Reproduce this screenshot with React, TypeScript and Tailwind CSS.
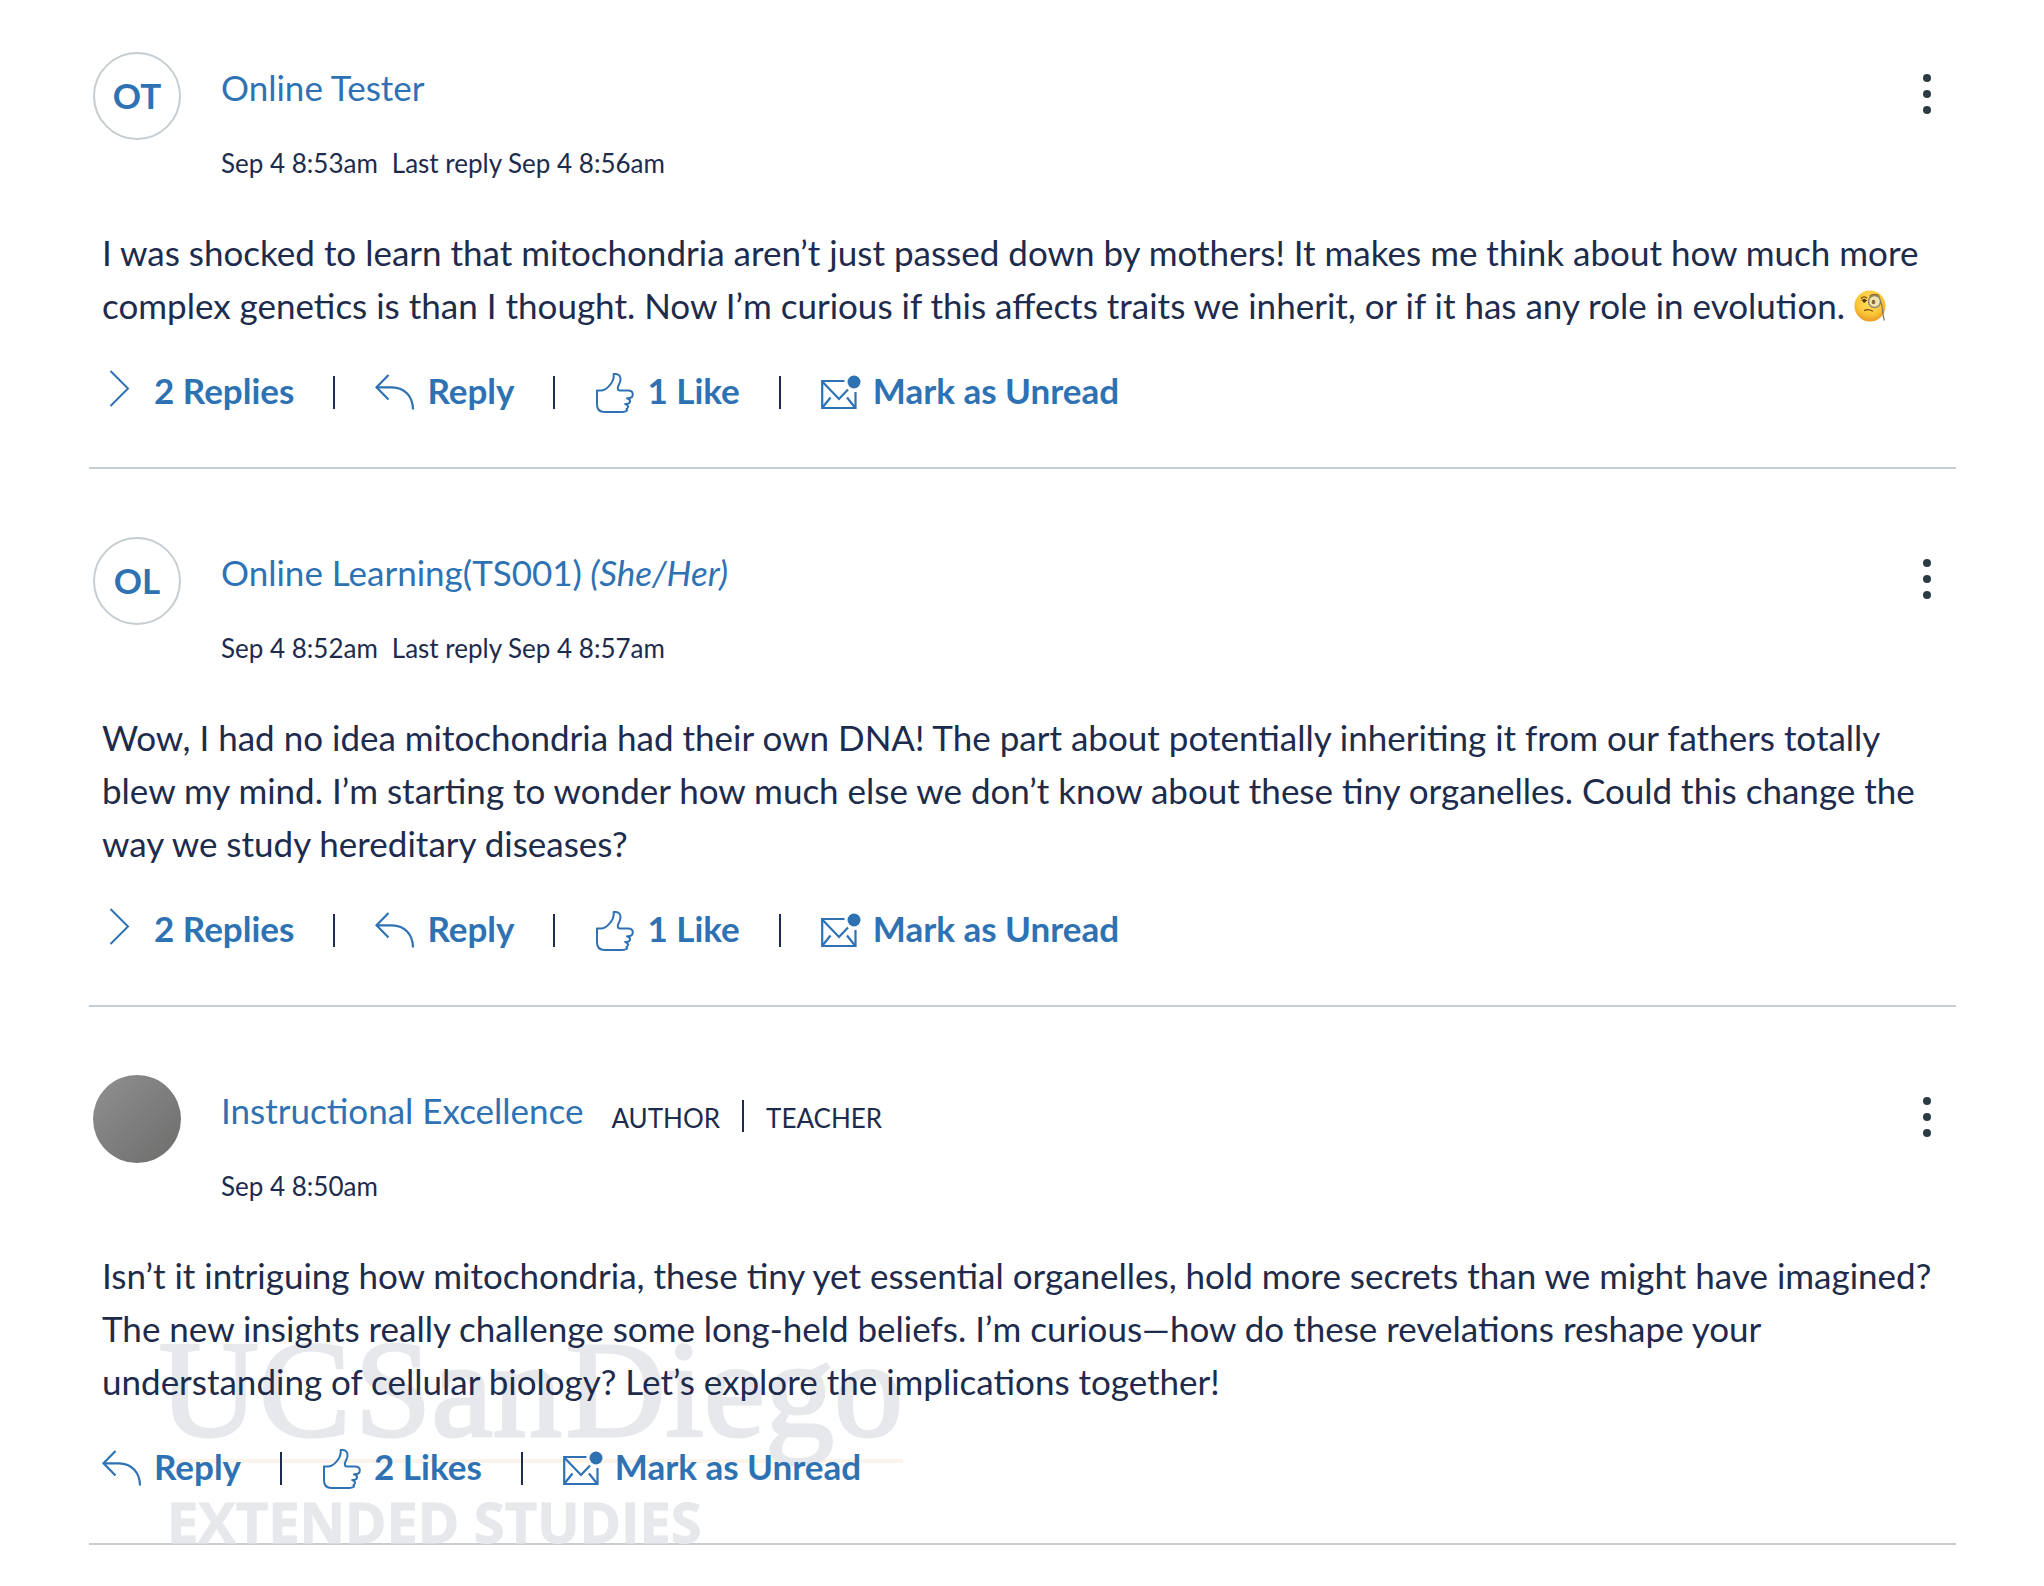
import { Fragment, type ReactNode } from "react";

type Post = {
  id: number;
  name: string;
  pronouns?: string;
  initials?: string;
  roles?: string[];
  posted: string;
  lastReply?: string;
  body: string;
  emoji?: boolean;
  replies?: number;
  likes: number;
};

const posts: Post[] = [
  {
    id: 1,
    name: "Online Tester",
    initials: "OT",
    posted: "Sep 4 8:53am",
    lastReply: "Sep 4 8:56am",
    body: "I was shocked to learn that mitochondria aren’t just passed down by mothers! It makes me think about how much more complex genetics is than I thought. Now I’m curious if this affects traits we inherit, or if it has any role in evolution.",
    emoji: true,
    replies: 2,
    likes: 1,
  },
  {
    id: 2,
    name: "Online Learning(TS001)",
    pronouns: "(She/Her)",
    initials: "OL",
    posted: "Sep 4 8:52am",
    lastReply: "Sep 4 8:57am",
    body: "Wow, I had no idea mitochondria had their own DNA! The part about potentially inheriting it from our fathers totally blew my mind. I’m starting to wonder how much else we don’t know about these tiny organelles. Could this change the way we study hereditary diseases?",
    replies: 2,
    likes: 1,
  },
  {
    id: 3,
    name: "Instructional Excellence",
    roles: ["AUTHOR", "TEACHER"],
    posted: "Sep 4 8:50am",
    body: "Isn’t it intriguing how mitochondria, these tiny yet essential organelles, hold more secrets than we might have imagined? The new insights really challenge some long-held beliefs. I’m curious—how do these revelations reshape your understanding of cellular biology? Let’s explore the implications together!",
    likes: 2,
  },
];

function ChevronIcon() {
  return (
    <svg className="size-10 shrink-0 overflow-visible" viewBox="0 0 40 40" fill="none" stroke="currentColor" strokeWidth="2" aria-hidden="true">
      <path d="M8.500 -1 L26 16.500 L8.500 34" />
    </svg>
  );
}

function ReplyIcon() {
  return (
    <svg className="size-10 shrink-0" viewBox="0 0 40 40" fill="none" stroke="currentColor" strokeWidth="2.200" aria-hidden="true">
      <path d="M13.500 3 L1.500 15.300 L13.500 27.500" />
      <path d="M1.500 15.300 H17 C30 15.300 38 25 38 37.500" />
    </svg>
  );
}

function LikeIcon() {
  return (
    <svg className="size-10 shrink-0 overflow-visible" viewBox="0 0 40 40" fill="none" stroke="currentColor" strokeWidth="2" strokeLinejoin="round" aria-hidden="true">
      <path d="M2 18.500 H6 C11 18.500 18.700 11 18.700 4 V2 H20.500 C24 2 25.800 4.500 25.500 8 C25.200 11.500 22.800 13.500 22.800 16 C22.800 18 23.800 18.500 25 18.500 H33 C36.200 18.500 37.800 20 37.800 22.200 C37.800 25 36 26.500 32 26.200 C36.300 27.500 36.300 32.200 30.200 32 C33.800 33 33.800 36 31.500 37 C33 38.500 31 40 27.500 40 H9.500 C4.500 40 2 37.300 2 32.500 Z" />
    </svg>
  );
}

function UnreadIcon() {
  return (
    <svg className="size-10 shrink-0" viewBox="0 0 40 40" fill="none" stroke="currentColor" strokeWidth="2.200" aria-hidden="true">
      <path d="M23.500 9 H1.200 V36 H34.500 V20" />
      <path d="M1.200 9.500 L18 27 L27 17.500" />
      <path d="M1.500 35.500 L9.500 25.500" />
      <path d="M34 35.500 L26 25.500" />
      <circle cx="33" cy="10" r="6.500" fill="currentColor" stroke="none" />
    </svg>
  );
}

function MonocleFace() {
  return (
    <svg className="inline-block size-8 align-[-3px]" viewBox="0 0 32 32" role="img" aria-label="Face with monocle">
      <defs>
        <radialGradient id="face" cx="50%" cy="35%" r="65%">
          <stop offset="0%" stopColor="#ffe36b" />
          <stop offset="65%" stopColor="#fcc636" />
          <stop offset="100%" stopColor="#e99a26" />
        </radialGradient>
      </defs>
      <circle cx="16" cy="16" r="15.500" fill="url(#face)" />
      <path d="M7 8.500 C9 6.200 11.500 6.500 13 8.300" fill="none" stroke="#7a4a12" strokeWidth="1.400" />
      <ellipse cx="10.300" cy="10.800" rx="1.700" ry="2" fill="#5b3410" />
      <path d="M7.500 10 L13 10.500" stroke="#5b3410" strokeWidth="1" />
      <path d="M15.500 6.500 C18 3.500 23 3.500 25.500 6.500" fill="none" stroke="#8a5a18" strokeWidth="1.200" />
      <circle cx="20.500" cy="11.500" r="6" fill="#f3e3b0" stroke="#8d8570" strokeWidth="1.500" />
      <ellipse cx="19.500" cy="12" rx="1.900" ry="2.300" fill="#8b6a3c" />
      <path d="M26.500 11.500 C29 16 28 22 30.300 30.500" fill="none" stroke="#77736a" strokeWidth="1.200" />
      <path d="M10.500 20.500 C13 19 16 19.500 18.500 21" fill="none" stroke="#7a4a12" strokeWidth="1.200" strokeLinecap="round" />
    </svg>
  );
}

function ActionButton({ icon, label }: { icon: ReactNode; label: string }) {
  return (
    <button type="button" className="flex cursor-pointer items-center gap-3 pl-px font-bold text-[#2f72b3] hover:underline">
      {icon}
      <span className="pb-1">{label}</span>
    </button>
  );
}

function Avatar({ initials }: { initials?: string }) {
  if (!initials) {
    return <div className="size-[88px] shrink-0 rounded-full bg-linear-to-br from-[#8f9090] to-[#6d6d6c]" />;
  }
  return (
    <div className="flex size-[88px] shrink-0 items-center justify-center rounded-full border-2 border-[#c7cdd1] pb-0.5 text-[35px] leading-10 font-bold text-[#2f72b3]">
      {initials}
    </div>
  );
}

function Watermark() {
  return (
    <div className="pointer-events-none absolute -bottom-1.5 left-[70px] -z-10 select-none whitespace-nowrap text-[#e7e8ec]" aria-hidden="true">
      <div className="flex gap-1 font-['Liberation_Serif',serif] text-[138px] leading-[138px] [-webkit-text-stroke:3px_#e7e8ec]">
        <span>UC</span>
        <span>San</span>
        <span>Diego</span>
      </div>
      <div className="ml-4 h-1 bg-[#fbf4ea]" />
      <div className="mt-[30px] pl-2 font-['Open_Sans',sans-serif] text-[56px] leading-[56px] font-bold [-webkit-text-stroke:1px_#e7e8ec]">
        EXTENDED STUDIES
      </div>
    </div>
  );
}

function PostEntry({ post }: { post: Post }) {
  const actions = [
    ...(post.replies ? [{ icon: <ChevronIcon />, label: `${post.replies} Replies` }] : []),
    { icon: <ReplyIcon />, label: "Reply" },
    { icon: <LikeIcon />, label: `${post.likes} ${post.likes === 1 ? "Like" : "Likes"}` },
    { icon: <UnreadIcon />, label: "Mark as Unread" },
  ];

  return (
    <article className="relative isolate border-b-2 border-[#c7cdd1] pt-[68px] pb-[55px] first:pt-[52px]">
      {!post.initials && <Watermark />}
      <header className="flex items-start pl-1">
        <Avatar initials={post.initials} />
        <div className="ml-10 flex-1 pt-[13px]">
          <div className="flex h-11 items-start leading-[44px]">
            <a href="#author" className="text-[#2f72b3] hover:underline">
              {post.name}
              {post.pronouns && <em> {post.pronouns}</em>}
            </a>
            {post.roles && (
              <div className="ml-7 flex items-center gap-[22px] pt-2 text-[26px]">
                {post.roles.map((role, i) => (
                  <Fragment key={role}>
                    {i > 0 && <span className="mb-1 h-8 w-0.5 bg-[#1d2b4c]" />}
                    <span>{role}</span>
                  </Fragment>
                ))}
              </div>
            )}
          </div>
          <div className="mt-[38px] flex gap-[14px] text-[26px] leading-8">
            <span>{post.posted}</span>
            {post.lastReply && <span>Last reply {post.lastReply}</span>}
          </div>
        </div>
        <button type="button" aria-label={`Manage post by ${post.name}`} className="mt-[22px] mr-[25px] flex cursor-pointer flex-col gap-2">
          <span className="size-2 rounded-full bg-[#2d3b45]" />
          <span className="size-2 rounded-full bg-[#2d3b45]" />
          <span className="size-2 rounded-full bg-[#2d3b45]" />
        </button>
      </header>
      <p className="mt-[47px] pl-[13px] leading-[53px]">
        {post.body}
        {post.emoji && <> <MonocleFace /></>}
      </p>
      <div className="mt-10 flex items-center gap-[39px] pl-3 leading-9">
        {actions.map((action, i) => (
          <Fragment key={action.label}>
            {i > 0 && <span className="h-[33px] w-0.5 bg-[#1d2b4c]" />}
            <ActionButton icon={action.icon} label={action.label} />
          </Fragment>
        ))}
      </div>
    </article>
  );
}

export default function App() {
  return (
    <main className="min-h-screen bg-white pr-[88px] pl-[89px] font-['Lato',sans-serif] text-[35px] text-[#1d2b4c]">
      {posts.map((post) => (
        <PostEntry key={post.id} post={post} />
      ))}
    </main>
  );
}
